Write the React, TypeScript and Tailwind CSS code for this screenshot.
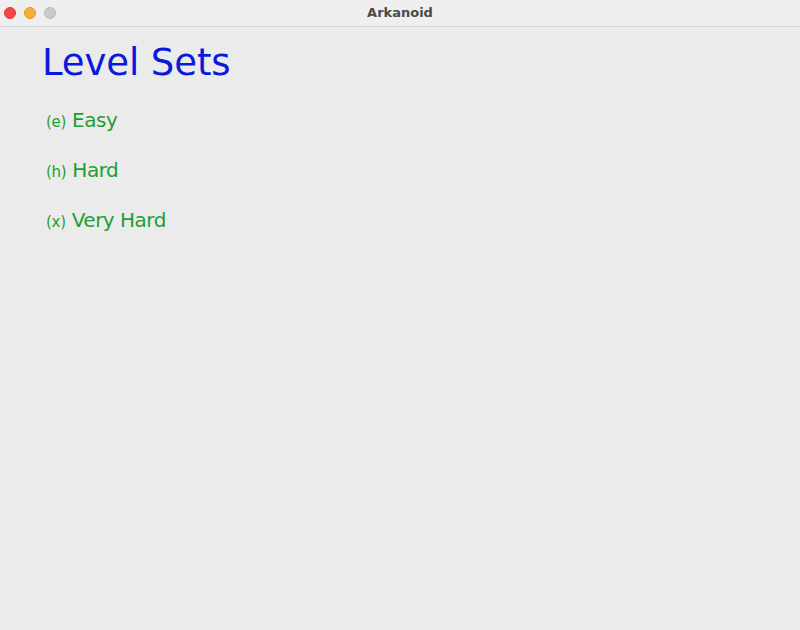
import React from 'react';

const levelSets = [
  { key: 'e', name: 'Easy' },
  { key: 'h', name: 'Hard' },
  { key: 'x', name: 'Very Hard' },
];

export default function App() {
  return (
    <div className="w-[800px] h-[630px] flex flex-col bg-[#ebebeb] overflow-hidden" style={{ fontFamily: '"DejaVu Sans", sans-serif' }}>
      {/* Title bar */}
      <div className="relative h-[27px] shrink-0 bg-[#efefef] border-b border-[#d2d2d2] flex items-center">
        <div className="flex items-center gap-[8px] pl-[4px]">
          <span className="w-[12px] h-[12px] rounded-full bg-[#f3484a] border border-[#e0393b]" />
          <span className="w-[12px] h-[12px] rounded-full bg-[#f8ad36] border border-[#e39a25]" />
          <span className="w-[12px] h-[12px] rounded-full bg-[#cacaca] border border-[#b8b8b8]" />
        </div>
        <div className="absolute inset-0 flex items-center justify-center text-[13px] font-bold text-[#4a4a4a]">Arkanoid</div>
      </div>

      {/* Content */}
      <div className="flex flex-col pl-[42px] pt-[14px]">
        <h1 className="text-[37px] leading-[44px] text-[#0b18dd] tracking-[-0.1px]">Level Sets</h1>
        <div className="flex flex-col gap-[20px] pt-[21px] pl-[4px]">
          {levelSets.map(s => (
            <div key={s.key} className="flex items-baseline gap-[6px] text-[#1d9f33] leading-[28px]">
              <span className="text-[15px] tracking-[-0.3px]">({s.key})</span>
              <span className="text-[20px] tracking-[-0.5px]">{s.name}</span>
            </div>
          ))}
        </div>
      </div>
    </div>
  );
}
